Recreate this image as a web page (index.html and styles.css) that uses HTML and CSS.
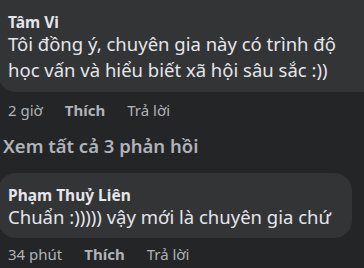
FILE: index.html
```html
<!DOCTYPE html>
<html lang="vi">
<head>
  <meta charset="UTF-8" />
  <meta name="viewport" content="width=device-width, initial-scale=1.0" />
  <title>Bình luận</title>
  <link rel="stylesheet" href="styles.css">
</head>
<body>
  <div class="thread">
    <!-- Bình luận gốc -->
    <div class="comment comment-top">
      <div class="bubble">
        <div class="author">Tâm Vi</div>
        <div class="text">Tôi đồng ý, chuyên gia này có trình độ<br>học vấn và hiểu biết xã hội sâu sắc :))</div>
      </div>
      <div class="actions">
        <span class="time">2 giờ</span>
        <span class="like">Thích</span>
        <span class="reply">Trả lời</span>
      </div>
    </div>

    <div class="more-replies">Xem tất cả 3 phản hồi</div>

    <!-- Bình luận thứ hai -->
    <div class="comment comment-last">
      <div class="bubble">
        <div class="author">Phạm Thuỷ Liên</div>
        <div class="text">Chuẩn :))))) vậy mới là chuyên gia chứ</div>
      </div>
      <div class="actions">
        <span class="time">34 phút</span>
        <span class="like">Thích</span>
        <span class="reply">Trả lời</span>
      </div>
    </div>
  </div>
</body>
</html>
```

FILE: styles.css
```css
body {
  margin: 0;
  padding: 0;
  background-color: #242526;
  color: #e4e6eb;
  font-family: 'Noto Sans', 'Open Sans', sans-serif;
  overflow: hidden;
}
.thread {
  width: 364px;
}
/* Bong bóng bình luận */
.bubble {
  background: #333435;
  border-radius: 18px;
  padding: 13px 12px 8px 10px;
  margin-left: -2px;
  width: 354px;
  box-sizing: border-box;
}
.comment-top .bubble {
  margin-top: -12px;
  width: 400px;
  padding-top: 25px;
  padding-bottom: 9px;
}
.author {
  font-size: 15.5px;
  font-weight: 700;
  line-height: 18px;
}
.text {
  font-size: 18.5px;
  line-height: 26px;
  white-space: nowrap;
}
/* Hàng hành động */
.actions {
  display: flex;
  gap: 22px;
  padding: 9px 0 0 8px;
  font-size: 15px;
  line-height: 18px;
  color: #b0b3b8;
}
.comment-last .actions {
  padding-top: 7px;
}
.actions .like {
  font-weight: 700;
}
.more-replies {
  padding: 15px 0 15px 3px;
  font-size: 18.5px;
  font-weight: 600;
  line-height: 24px;
  color: #b0b3b8;
}
```
